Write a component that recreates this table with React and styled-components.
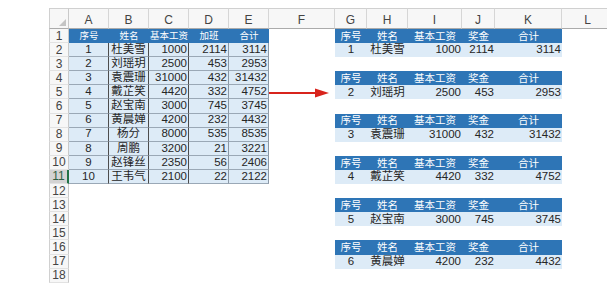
import React from 'react';
import styled, { createGlobalStyle } from 'styled-components';

// Estilo global: sem margem, fonte padrão da planilha
const GlobalStyle = createGlobalStyle`
  html, body {
    margin: 0;
    padding: 0;
    background: #ffffff;
  }
  body {
    font-family: "Liberation Sans", "Noto Sans CJK SC", sans-serif;
  }
`;

// Larguras das colunas (cabeçalho de linha + A..L)
const larguras = [20, 40, 40, 40, 40, 40, 66, 32, 41, 54, 33, 67, 52];
const letras = ['A', 'B', 'C', 'D', 'E', 'F', 'G', 'H', 'I', 'J', 'K', 'L'];
const ALTURA_LINHA = 14.1;

const pessoas = [
  [1, '杜美雪', 1000, 2114, 3114],
  [2, '刘瑶玥', 2500, 453, 2953],
  [3, '袁震珊', 31000, 432, 31432],
  [4, '戴芷笑', 4420, 332, 4752],
  [5, '赵宝南', 3000, 745, 3745],
  [6, '黄晨婵', 4200, 232, 4432],
  [7, '杨分', 8000, 535, 8535],
  [8, '周鹏', 3200, 21, 3221],
  [9, '赵锋丝', 2350, 56, 2406],
  [10, '王韦气', 2100, 22, 2122],
];

const cabecalhoEsq = ['序号', '姓名', '基本工资', '加班', '合计'];
const cabecalhoDir = ['序号', '姓名', '基本工资', '奖金', '合计'];
const alinhaEsq = ['center', 'center', 'right', 'right', 'right'];
const alinhaDir = ['center', 'center', 'right', 'right', 'right'];

// Monta as células de uma linha da planilha
const montarLinha = (r) => {
  const celulas = [];
  for (let c = 0; c < 12; c++) {
    // Tabela da esquerda (A..E)
    if (c < 5) {
      if (r === 1) {
        celulas.push({ tipo: 'cab', texto: cabecalhoEsq[c], pequeno: true });
      } else if (r <= 11) {
        celulas.push({
          tipo: 'dadoEsq',
          texto: pessoas[r - 2][c],
          alinha: alinhaEsq[c],
          escura: c < 3,
        });
      } else {
        celulas.push({ tipo: 'vazio' });
      }
      continue;
    }
    // Tabelas pequenas da direita (G..K)
    if (c >= 6 && c <= 10) {
      const k = c - 6;
      if ((r - 1) % 3 === 0 && r <= 16) {
        celulas.push({ tipo: 'cab', texto: cabecalhoDir[k], pequeno: false });
        continue;
      }
      if ((r - 2) % 3 === 0 && r <= 17) {
        const p = pessoas[(r - 2) / 3];
        celulas.push({ tipo: 'dadoDir', texto: p[k], alinha: alinhaDir[k] });
        continue;
      }
    }
    celulas.push({ tipo: 'vazio' });
  }
  return celulas;
};

const linhas = Array.from({ length: 18 }, (_, i) => i + 1);

const App = () => {
  return (
    <>
      <GlobalStyle />
      <Folha>
        <Grade>
          <Canto />
          {letras.map((l) => (
            <CabColuna key={l}>{l}</CabColuna>
          ))}

          {linhas.map((r) => (
            <React.Fragment key={r}>
              <CabLinha $selecionada={r === 11}>{r}</CabLinha>
              {montarLinha(r).map((cel, i) => {
                if (cel.tipo === 'cab') {
                  return (
                    <CelCabecalho key={i} $pequeno={cel.pequeno}>
                      {cel.texto}
                    </CelCabecalho>
                  );
                }
                if (cel.tipo === 'dadoEsq') {
                  return (
                    <CelBorda key={i} $alinha={cel.alinha} $escura={cel.escura}>
                      {cel.texto}
                    </CelBorda>
                  );
                }
                if (cel.tipo === 'dadoDir') {
                  return (
                    <CelDado key={i} $alinha={cel.alinha}>
                      {cel.texto}
                    </CelDado>
                  );
                }
                return <CelVazia key={i} />;
              })}
            </React.Fragment>
          ))}
        </Grade>

        {/* Seta vermelha apontando pra direita */}
        <Seta width="62" height="12" viewBox="0 0 62 12">
          <line x1="1" y1="6" x2="49" y2="6" stroke="#d8241c" strokeWidth="2" />
          <polygon points="47,1.5 61,6 47,10.5" fill="#d8241c" />
        </Seta>
      </Folha>
    </>
  );
};

/* Estilos */

const Folha = styled.div`
  position: relative;
  width: 609px;
  height: 289px;
  overflow: hidden;
  padding: 8px 0 0 49px;
  box-sizing: border-box;
`;

const Grade = styled.div`
  display: grid;
  grid-template-columns: ${larguras.map((w) => `${w}px`).join(' ')};
  grid-template-rows: 21px repeat(18, ${ALTURA_LINHA}px);
  width: 558px;
  overflow: hidden;
  font-size: 11.5px;
  color: #262626;
`;

const Canto = styled.div`
  position: relative;
  background: #f7f7f7;
  border-top: 1px solid #d0d0d0;
  border-left: 1px solid #d0d0d0;
  border-right: 1px solid #c9c9c9;
  border-bottom: 1px solid #ababab;
  box-sizing: border-box;

  &::after {
    content: '';
    position: absolute;
    right: 2px;
    bottom: 2px;
    width: 0;
    height: 0;
    border-left: 7px solid transparent;
    border-bottom: 7px solid #c4c4c4;
  }
`;

const CabColuna = styled.div`
  display: flex;
  align-items: flex-end;
  justify-content: center;
  padding-bottom: 1px;
  background: #f7f7f7;
  border-top: 1px solid #d0d0d0;
  border-right: 1px solid #d6d6d6;
  border-bottom: 1px solid #ababab;
  box-sizing: border-box;
  font-size: 12px;
  line-height: 13px;
  color: #444;
`;

const CabLinha = styled.div`
  display: flex;
  align-items: center;
  justify-content: center;
  background: ${(p) => (p.$selecionada ? '#d3d3d3' : '#f7f7f7')};
  border-left: 1px solid #d0d0d0;
  border-right: ${(p) => (p.$selecionada ? '2px solid #217346' : '1px solid #c9c9c9')};
  border-bottom: 1px solid #e2e2e2;
  box-sizing: border-box;
  font-size: 12px;
  line-height: 1;
  color: ${(p) => (p.$selecionada ? '#2f5f43' : '#444')};
`;

const Cel = styled.div`
  display: flex;
  align-items: center;
  justify-content: ${(p) =>
    p.$alinha === 'right' ? 'flex-end' : p.$alinha === 'left' ? 'flex-start' : 'center'};
  padding: 0 1px;
  box-sizing: border-box;
  white-space: nowrap;
  line-height: 1;
`;

const CelVazia = styled.div`
  background: #ffffff;
`;

const CelCabecalho = styled(Cel)`
  background: #2e75b6;
  color: #ffffff;
  justify-content: center;
  padding: 0;
  font-size: ${(p) => (p.$pequeno ? '9.5px' : '10.5px')};
`;

const CelDado = styled(Cel)`
  background: #ddebf7;
  color: #262626;
`;

const CelBorda = styled(Cel)`
  background: #ddebf7;
  color: #262626;
  border-right: 1px solid ${(p) => (p.$escura ? '#4d4d4d' : '#8b98a6')};
  border-bottom: 1px solid #9aa8b6;
`;

const Seta = styled.svg`
  position: absolute;
  left: 268px;
  top: 87px;
`;

export default App;
